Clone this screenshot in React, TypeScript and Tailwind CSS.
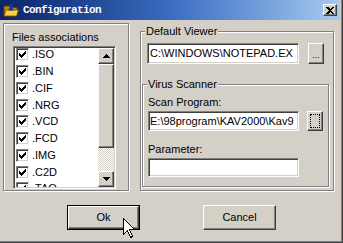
const raised =
  "border border-t-white border-l-white border-r-[#404040] border-b-[#404040] shadow-[inset_-1px_-1px_0_#808080,inset_1px_1px_0_#d4d0c8]";
const sunken =
  "border border-t-[#808080] border-l-[#808080] border-r-white border-b-white shadow-[inset_1px_1px_0_#404040,inset_-1px_-1px_0_#d4d0c8] p-[1px] bg-white";
const etched = "border border-[#808080] shadow-[inset_1px_1px_0_#fff,1px_1px_0_#fff]";

const exts = [".ISO", ".BIN", ".CIF", ".NRG", ".VCD", ".FCD", ".IMG", ".C2D", ".TAO"];

const Check = () => (
  <div className={`${sunken} w-[13px] h-[13px] shrink-0 flex items-start justify-start`}>
    <svg width="7" height="7" viewBox="0 0 7 7" className="ml-[1px] mt-[1px]" shapeRendering="crispEdges">
      <path d="M0 2h1v3H0z M1 3h1v3H1z M2 4h1v3H2z M3 3h1v3H3z M4 2h1v3H4z M5 1h1v3H5z M6 0h1v3H6z" fill="#000" />
    </svg>
  </div>
);

const Arrow = ({ down }: { down?: boolean }) => (
  <svg width="7" height="4" viewBox="0 0 7 4" shapeRendering="crispEdges">
    <path d={down ? "M0 0h7v1H0z M1 1h5v1H1z M2 2h3v1H2z M3 3h1v1H3z" : "M3 0h1v1H3z M2 1h3v1H2z M1 2h5v1H1z M0 3h7v1H0z"} fill="#000" />
  </svg>
);

export default function App() {
  return (
    <div className="relative w-[343px] h-[243px] bg-[#d4d0c8] flex flex-col font-['Liberation_Sans',Arial,sans-serif] text-[11px] text-black border-r border-b border-[#404040] shadow-[inset_-1px_-1px_0_#808080] overflow-hidden">
      {/* title bar */}
      <div className="h-[20px] w-[340px] shrink-0 flex items-center bg-gradient-to-r from-[#0a246a] via-[#3a6cc0] to-[#a6caf0]">
        <svg width="16" height="16" viewBox="0 0 16 16" className="ml-[3px]">
          <path d="M1 4h5l1.5 1.5H14v8.5H1z" fill="#c08a10" stroke="#5a3a00" strokeWidth="0.8" />
          <path d="M1 14l2-6h12.5l-2 6z" fill="#f8d040" stroke="#7a5200" strokeWidth="0.8" />
          <circle cx="8" cy="4" r="2" fill="#1c3a8a" />
          <path d="M5.5 8.5c0-2 1-3 2.5-3s2.5 1 2.5 3z" fill="#1c3a8a" />
        </svg>
        <span className="ml-[4px] font-['Liberation_Mono',monospace] font-bold text-[11px] tracking-[-0.6px] text-white leading-none">
          Configuration
        </span>
        <div className={`${raised} ml-auto mr-[3px] w-[14px] h-[12px] bg-[#d4d0c8] flex items-center justify-center`}>
          <svg width="8" height="7" viewBox="0 0 8 7" shapeRendering="crispEdges">
            <path d="M0 0h2l2 2 2-2h2L5 3.5 8 7H6L4 5 2 7H0l3-3.5z" fill="#000" />
          </svg>
        </div>
      </div>

      {/* main area */}
      <div className="flex mt-[3px] ml-[3px] h-[168px]">
        {/* left panel */}
        <div className={`${etched} w-[126px] h-full flex flex-col`}>
          <div className="ml-[8px] mt-[7px] leading-[13px] h-[13px]">Files associations</div>
          <div className={`${sunken} ml-[9px] mt-[2px] w-[103px] h-[143px] flex overflow-hidden`}>
            <div className="flex-1 flex flex-col overflow-hidden -mt-[1.5px]">
              {exts.map((e) => (
                <div key={e} className="h-[16.75px] shrink-0 flex items-center pl-[1px] gap-[3px] leading-none text-[11px]">
                  <Check />
                  <span>{e}</span>
                </div>
              ))}
            </div>
            <div className="w-[16px] flex flex-col">
              <div className={`${raised} h-[16px] bg-[#d4d0c8] flex items-center justify-center`}>
                <Arrow />
              </div>
              <div className={`${raised} h-[84px] bg-[#d4d0c8]`} />
              <div className="flex-1 bg-[repeating-conic-gradient(#ffffff_0%_25%,#d4d0c8_0%_50%)] bg-[length:2px_2px]" />
              <div className={`${raised} h-[16px] bg-[#d4d0c8] flex items-center justify-center`}>
                <Arrow down />
              </div>
            </div>
          </div>
        </div>

        {/* right group */}
        <div className={`${etched} relative ml-[11px] mt-[8px] w-[194px] h-[160px] flex flex-col`}>
          <span className="absolute left-[4px] top-[-7px] px-[1px] bg-[#d4d0c8] leading-[13px]">Default Viewer</span>
          <div className="flex items-start ml-[6px] mt-[11px]">
            <div className={`${sunken} w-[152px] h-[21px] pl-[2px] overflow-hidden whitespace-nowrap leading-[17px]`}>
              C:\WINDOWS\NOTEPAD.EX
            </div>
            <div className={`${raised} ml-[9px] w-[16px] h-[21px] bg-[#d4d0c8] flex items-end justify-center pb-[3px] leading-none text-[9px]`}>
              ...
            </div>
          </div>

          <div className={`${etched} relative ml-[1px] mt-[20px] w-[187px] h-[103px] flex flex-col`}>
            <span className="absolute left-[4px] top-[-7px] px-[1px] bg-[#d4d0c8] leading-[13px]">Virus Scanner</span>
            <div className="ml-[5px] mt-[11px] leading-[13px]">Scan Program:</div>
            <div className="flex items-start ml-[5px] mt-[2px]">
              <div className={`${sunken} w-[151px] h-[20px] pl-[1px] overflow-hidden whitespace-nowrap leading-[16px]`}>
                E:\98program\KAV2000\Kav9
              </div>
              <div className={`${raised} ml-[8px] w-[16px] h-[20px] bg-[#d4d0c8] p-[2px]`}>
                <div className="w-full h-full border border-dotted border-black" />
              </div>
            </div>
            <div className="ml-[5px] mt-[12px] leading-[13px]">Parameter:</div>
            <div className={`${sunken} ml-[5px] mt-[2px] w-[151px] h-[19px]`} />
          </div>
        </div>
      </div>

      {/* buttons */}
      <div className="flex mt-[14px] ml-[67px] gap-[63px]">
        <div className="w-[73px] h-[25px] border border-black">
          <div className={`${raised} w-full h-full bg-[#d4d0c8] flex items-center justify-center text-[11px]`}>Ok</div>
        </div>
        <div className={`${raised} w-[73px] h-[25px] bg-[#d4d0c8] flex items-center justify-center text-[11px]`}>Cancel</div>
      </div>

      {/* mouse cursor */}
      <svg width="12" height="20" viewBox="0 0 12 20" className="absolute left-[123px] top-[218px]" shapeRendering="crispEdges">
        <path d="M0.5 0.5V16.5L4.5 12.5L7.5 19.5L9.5 18.5L6.5 11.5H11.5Z" fill="#fff" stroke="#000" strokeWidth="1" />
      </svg>
    </div>
  );
}
